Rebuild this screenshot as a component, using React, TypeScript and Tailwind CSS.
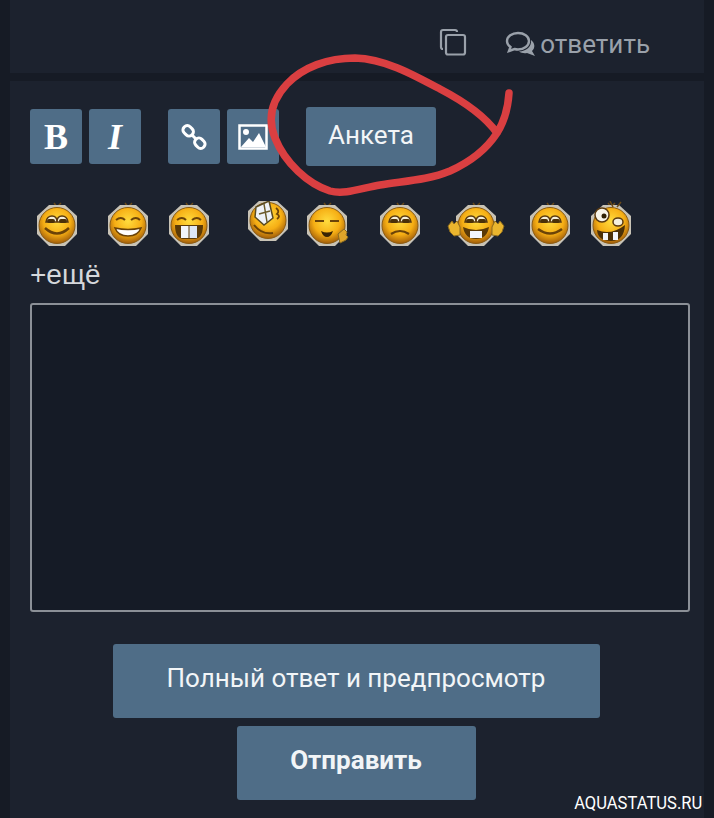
const font = { fontFamily: "Roboto, 'Noto Sans', sans-serif" };

function Shell({ children, w = 44, offset = 0, id }: { children?: React.ReactNode; w?: number; offset?: number; id: string }) {
  const x = (w - 44) / 2;
  return (
    <svg width={w} height="48" viewBox={`0 0 ${w} 48`} className="shrink-0">
      <defs>
        <radialGradient id={id} cx="50%" cy="38%" r="60%">
          <stop offset="0%" stopColor="#ffdc3e" />
          <stop offset="62%" stopColor="#f6ae14" />
          <stop offset="100%" stopColor="#a9640a" />
        </radialGradient>
      </defs>
      <g transform={`translate(${x} ${offset})`}>
        <path d="M22 6l-3-4M22 6l4-4" stroke="#6a4a18" strokeWidth="1.500" fill="none" />
        <polygon points="14,4 30,4 42,15 42,33 30,45 14,45 2,33 2,15" fill="#c8c3b6" />
        <circle cx="22" cy="24.500" r="18" fill={`url(#${id})`} stroke="#8a5c14" strokeWidth="1" />
        {children}
      </g>
    </svg>
  );
}

const Eyes = () => (
  <g>
    <path d="M11 21q1-6 6-6t5 6zM22 21q0-6 5-6t6 6z" fill="#f5f0dc" stroke="#5a3a10" strokeWidth="1.500" />
    <rect x="12" y="18" width="8" height="4" rx="2" fill="#4a3008" />
    <rect x="24" y="18" width="8" height="4" rx="2" fill="#4a3008" />
  </g>
);
const Closed = () => <path d="M10 19q5-4 9 0M25 19q5-4 9 0" stroke="#6b4308" strokeWidth="2" fill="none" />;

const Face1 = () => <Shell id="f1"><Eyes /><path d="M10 27q12 11 24 0" stroke="#6b4308" strokeWidth="2.500" fill="none" /></Shell>;
const Face2 = () => <Shell id="f2"><Closed /><path d="M9 27q13 3 26 0q-3 8-13 8t-13-8z" fill="#fff" stroke="#6b4308" strokeWidth="1.500" /></Shell>;
const Face3 = () => (
  <Shell id="f3">
    <Closed />
    <path d="M8 24h28q0 13-8 14h-12q-8-1-8-14z" fill="#5a3a08" />
    <rect x="14" y="25" width="7.500" height="12" fill="#f2f5fa" />
    <rect x="22.500" y="25" width="7.500" height="12" fill="#dde6f4" />
  </Shell>
);
const Face4 = () => (
  <Shell id="f4" offset={-5}>
    <path d="M10 11l13-6 4 17-9 7-9-8z" fill="#eef2f7" stroke="#5a4a20" strokeWidth="1.500" />
    <path d="M13 18l11-3M18 8l3 18" stroke="#6b5a2a" strokeWidth="1.500" />
    <path d="M30 12q4 3 1 6q4 2 0 5" stroke="#6b4308" strokeWidth="1.800" fill="none" />
    <path d="M8 29q8 10 19 8" stroke="#6b4308" strokeWidth="2" fill="none" />
  </Shell>
);
const Face5 = () => (
  <Shell id="f5">
    <path d="M10 20h9M25 20h9" stroke="#6b4308" strokeWidth="2" />
    <path d="M16 30q6 3 12 0q-2 6-6 6t-6-6z" fill="#3a2404" />
    <path d="M33 33l6-5 3 3-1 3 2 2-2 3-6 3z" fill="#e0a52a" stroke="#8a6a20" strokeWidth="1" />
  </Shell>
);
const Face6 = () => <Shell id="f6"><Eyes /><path d="M13 33q9-6 18 0" stroke="#6b4308" strokeWidth="2.200" fill="none" /></Shell>;
const Face7 = () => (
  <Shell id="f7" w={60}>
    <path d="M-6 25l4-5 2 3 3-3 3 6 0 8-6 1-4-4z" fill="#eab52e" stroke="#8a6a20" strokeWidth="1" />
    <path d="M50 25l-4-5-2 3-3-3-3 6 0 8 6 1 4-4z" fill="#eab52e" stroke="#8a6a20" strokeWidth="1" />
    <Eyes />
    <path d="M9 26q13 6 26 0q-2 12-13 12t-13-12z" fill="#5a3a08" />
    <rect x="16" y="30" width="12" height="7" fill="#f2f5fa" />
  </Shell>
);
const Face8 = () => <Shell id="f8"><Eyes /><path d="M10 28q12 9 24 0" stroke="#6b4308" strokeWidth="2.500" fill="none" /></Shell>;
const Face9 = () => (
  <Shell id="f9">
    <path d="M24 6l-3-6M28 6l4-5" stroke="#6a4a18" strokeWidth="1.500" />
    <circle cx="13" cy="14" r="7" fill="#f7f4e8" stroke="#5a3a10" strokeWidth="1.500" />
    <circle cx="15" cy="15" r="2.500" fill="#2e2004" />
    <ellipse cx="29" cy="21" rx="5" ry="4" fill="#f5f0dc" stroke="#5a3a10" strokeWidth="1.500" />
    <path d="M8 29q14 6 28-5q-1 16-14 16t-14-11z" fill="#4a3008" />
    <rect x="14" y="32" width="5" height="7" fill="#f2f5fa" />
    <rect x="24" y="31" width="5" height="8" fill="#f2f5fa" />
  </Shell>
);

function Tool({ children }: { children: React.ReactNode }) {
  return (
    <button className="flex h-[55px] w-[52px] items-center justify-center rounded-[3px] bg-[#4f6d87] text-white">
      {children}
    </button>
  );
}

export default function App() {
  return (
    <div className="relative h-[818px] w-[714px] overflow-hidden bg-[#161b25] pl-[10px] pr-[10px]" style={font}>
      <div className="flex h-[73px] items-start justify-end bg-[#1c222e] pr-[54px] pt-[27px] text-[#9aa1aa]">
        <svg width="28" height="28" viewBox="0 0 28 28" fill="none" stroke="#9aa1aa" strokeWidth="2.200" className="mr-[38px] mt-[1px]">
          <path d="M4 21c-1.500 0-2-.7-2-2V4c0-1.300.7-2 2-2h12c1.200 0 2 .7 2 2" />
          <rect x="7" y="7" width="19" height="19.500" rx="2" />
        </svg>
        <svg width="32" height="26" viewBox="0 0 32 26" fill="none" stroke="#9aa1aa" strokeWidth="2.400" className="mr-[3px] mt-[4px]">
          <path d="M13 2C7 2 2 5.500 2 10c0 2.500 1.500 4.500 3.500 6L4 20l5.500-2c1 .3 2.300.5 3.500.5 6 0 11-3.800 11-8.500S19 2 13 2z" />
          <path d="M26 9c4 3 4.500 8 1 11l3 5-8-3c-3 .5-6 0-8-1.500 7 0 13-5 12-11.500z" fill="#9aa1aa" stroke="none" />
        </svg>
        <span className="text-[26px] leading-[34px]">ответить</span>
      </div>

      <div className="mt-[8px] h-[737px] bg-[#1c222e] pl-[20px] pr-[10px] pt-[26px]">
        <div className="flex items-center">
          <Tool><span className="text-[36px] font-bold leading-none" style={{ fontFamily: "'Liberation Serif', serif" }}>B</span></Tool>
          <div className="ml-[7px]"><Tool><span className="text-[36px] font-bold italic leading-none" style={{ fontFamily: "'Liberation Serif', serif" }}>I</span></Tool></div>
          <div className="ml-[27px]">
            <Tool>
              <svg width="28" height="28" viewBox="0 0 28 28" fill="none" stroke="#fff" strokeWidth="3">
                <rect x="2.500" y="3.500" width="11" height="8.500" rx="4" transform="rotate(45 8 8)" />
                <rect x="14.500" y="16" width="11" height="8.500" rx="4" transform="rotate(45 20 20)" />
                <path d="M12 12l4 4" />
              </svg>
            </Tool>
          </div>
          <div className="ml-[7px]">
            <Tool>
              <svg width="30" height="26" viewBox="0 0 30 26">
                <rect x="1.500" y="1.500" width="27" height="23" fill="none" stroke="#fff" strokeWidth="2.500" />
                <circle cx="8" cy="8" r="3" fill="#fff" />
                <path d="M3 23l8-9 4 4 6-9 7 14z" fill="#fff" />
              </svg>
            </Tool>
          </div>
          <button className="ml-[27px] flex h-[59px] w-[130px] items-center justify-center rounded-[3px] bg-[#4f6d87] pb-[3px] text-[26px] text-[#f2f5f7]">Анкета</button>
        </div>

        <div className="mt-[35px] flex h-[48px] items-center">
          <div className="ml-[5px]"><Face1 /></div>
          <div className="ml-[27px]"><Face2 /></div>
          <div className="ml-[17px]"><Face3 /></div>
          <div className="ml-[35px]"><Face4 /></div>
          <div className="ml-[15px]"><Face5 /></div>
          <div className="ml-[29px]"><Face6 /></div>
          <div className="ml-[24px]"><Face7 /></div>
          <div className="ml-[22px]"><Face8 /></div>
          <div className="ml-[17px]"><Face9 /></div>
        </div>

        <div className="mt-[9px] text-[28px] leading-[34px] text-[#d5d8dc]" style={{ fontFamily: "'Liberation Sans', sans-serif" }}>+ещё</div>

        <textarea className="mt-[11px] block h-[309px] w-[660px] resize-none rounded-[3px] border-2 border-[#8b9097] bg-[#151b26] outline-none" />

        <div className="mt-[32px] flex flex-col items-center gap-[8px] pr-[12px]">
          <button className="flex h-[74px] w-[487px] items-center justify-center rounded-[3px] bg-[#4f6d87] pb-[6px] text-[26px] text-[#f2f5f7]">Полный ответ и предпросмотр</button>
          <button className="flex h-[74px] w-[239px] items-center justify-center rounded-[3px] bg-[#4f6d87] pb-[6px] text-[26px] font-bold text-[#f2f5f7]">Отправить</button>
        </div>
      </div>

      <svg width="714" height="818" viewBox="0 0 714 818" className="pointer-events-none absolute left-0 top-0" fill="none">
        <path
          d="M509 93C508 108 504 122 497 133C486 150 470 162 450 171C428 180 404 181 380 185C362 188 345 195 330 191C308 184 285 163 275 138C267 118 272 100 287 84C303 67 328 58 355 58C385 59 412 74 440 89C465 102 484 115 497 133"
          stroke="#da3f41"
          strokeWidth="7.500"
          strokeLinecap="round"
          strokeLinejoin="round"
        />
      </svg>

      <div className="absolute bottom-[3px] right-[12px] text-[18px] leading-[24px] text-white" style={{ transform: "scaleX(0.92)", transformOrigin: "right" }}>
        AQUASTATUS.RU
      </div>
    </div>
  );
}
